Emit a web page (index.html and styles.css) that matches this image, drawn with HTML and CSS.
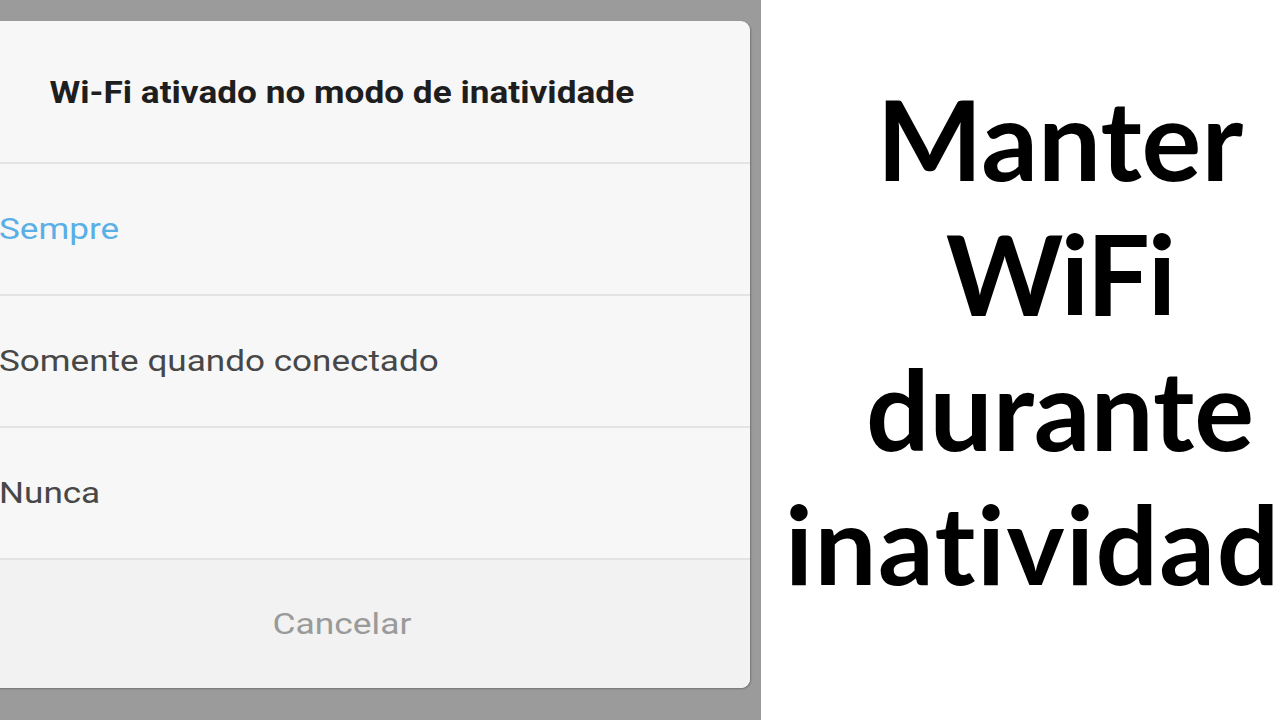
FILE: index.html
```html
<!DOCTYPE html>
<html lang="pt">
<head>
<meta charset="utf-8">
<title>Manter WiFi durante inatividade</title>
<link rel="stylesheet" href="styles.css">
</head>
<body>
<div class="page">
  <div class="left">
    <div class="dialog">
      <div class="title"><span class="txt">Wi-Fi ativado no modo de inatividade</span></div>
      <div class="option selected"><span class="txt">Sempre</span></div>
      <div class="option"><span class="txt">Somente quando conectado</span></div>
      <div class="option"><span class="txt">Nunca</span></div>
      <div class="cancel"><span class="txt">Cancelar</span></div>
    </div>
  </div>
  <div class="right">
    <div class="headline">
      <div class="line">Manter</div>
      <div class="line narrow">WiFi</div>
      <div class="line">durante</div>
      <div class="line wide">inatividade</div>
    </div>
  </div>
</div>
</body>
</html>
```
FILE: styles.css
```css
html, body {
  margin: 0;
  padding: 0;
  width: 1280px;
  height: 720px;
  overflow: hidden;
  background: #ffffff;
}
.page {
  display: flex;
  width: 1280px;
  height: 720px;
}
.left {
  width: 761px;
  flex: none;
  background: #9b9b9b;
  padding-top: 21px;
  box-sizing: border-box;
  overflow: hidden;
}
.dialog {
  margin-left: -66px;
  width: 816px;
  height: 667px;
  background: #f7f7f7;
  border-radius: 9px;
  overflow: hidden;
  display: flex;
  flex-direction: column;
  font-family: Roboto, "Liberation Sans", sans-serif;
  box-shadow: 1px 1px 2px rgba(0,0,0,0.25);
}
.txt {
  display: inline-block;
  white-space: nowrap;
}
.title {
  height: 141px;
  display: flex;
  align-items: center;
  justify-content: center;
  font-weight: 700;
  font-size: 32px;
  color: #1e1e1e;
  border-bottom: 2px solid #e3e3e3;
}
.title .txt {
  transform: scaleX(1.1);
  transform-origin: center;
}
.option {
  height: 130px;
  display: flex;
  align-items: center;
  padding-left: 65px;
  font-size: 29px;
  color: #474747;
  border-bottom: 2px solid #e3e3e3;
}
.option .txt {
  transform: scaleX(1.21);
  transform-origin: left center;
}
.option.selected {
  color: #5aafe6;
}
.cancel {
  flex: 1;
  background: #f2f2f2;
  display: flex;
  align-items: center;
  justify-content: center;
  font-size: 29px;
  color: #9a9a9a;
}
.cancel .txt {
  transform: scaleX(1.22);
  transform-origin: center;
}
.right {
  flex: 1;
}
.headline {
  margin-left: 24px;
  width: 550px;
  padding-top: 70px;
  text-align: center;
  font-family: Lato, "DejaVu Sans", sans-serif;
  font-weight: 700;
  font-size: 112px;
  line-height: 135px;
  color: #000000;
  font-variant-ligatures: none;
}
.line {
  white-space: nowrap;
}
.line.narrow {
  letter-spacing: -2px;
}
.line.wide {
  font-size: 110px;
  letter-spacing: 1.5px;
}
```
